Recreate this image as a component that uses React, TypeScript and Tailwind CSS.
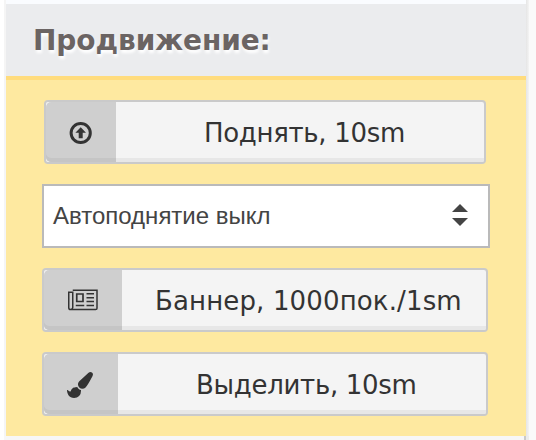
import React from 'react';

function ArrowCircleUpIcon() {
  return (
    <svg width="24" height="24" viewBox="0 0 24 24" fill="none">
      <circle cx="11.7" cy="12" r="9.6" stroke="#333" strokeWidth="3" />
      <path d="M11.7 6.2 17 11.8H13.7V17.2H9.7V11.8H6.4Z" fill="#333" />
    </svg>
  );
}

function NewspaperIcon() {
  return (
    <svg width="30" height="22" viewBox="0 0 30 22" fill="none" stroke="#333" strokeWidth="1.5">
      <path d="M4.75 1.25H29V19.2Q29 20.5 27.7 20.5H2.5Q.75 20.5 .75 18.7V3.25H4.75V18.5Q4.75 20.2 3 20.5" />
      <path d="M8.75 5H15V12.5H8.75Z" strokeWidth="1.7" />
      <path d="M18.5 4.75H26M18.5 8.75H26M18.5 12.5H26M7.75 16.5H16.25M18.5 16.5H26" />
    </svg>
  );
}

function BrushIcon() {
  return (
    <svg width="26" height="26" viewBox="0 0 1792 1792" fill="#333">
      <path d="M1615 0q70 0 122.5 46.5t52.5 116.5q0 63-45 151-332 629-465 752-97 91-218 91-126 0-216.5-92.5t-90.5-219.5q0-128 92-212l638-579q59-54 130-54zm-909 1034q39 76 106.5 130t150.5 76l1 71q4 213-129.5 347t-348.5 134q-123 0-218-46.5t-152.5-127.5-86.5-183-29-220q7 5 41 30t62 44.5 59 36.5 46 17q41 0 55-37 25-66 57.5-112.5t69.5-76 88-47.5 103-25.5 125-10.5z" />
    </svg>
  );
}

interface PromoButtonProps {
  icon: React.ReactNode;
  label: string;
  className: string;
  iconClassName: string;
  labelClassName: string;
}

function PromoButton({ icon, label, className, iconClassName, labelClassName }: PromoButtonProps) {
  return (
    <button
      className={`flex h-16 overflow-hidden rounded-[4px] border-2 border-[#cacaca] bg-[#f4f4f4] text-left text-[#333] ${className}`}
    >
      <span
        className={`flex h-full shrink-0 items-center rounded-l-[5px] bg-[#cfcfcf] shadow-[inset_0_-4px_0_#c5c5c5] ${iconClassName}`}
      >
        {icon}
      </span>
      <span
        className={`flex h-full flex-1 items-center text-[26px] whitespace-nowrap shadow-[inset_0_-4px_0_#e7e7e7] ${labelClassName}`}
      >
        {label}
      </span>
    </button>
  );
}

export default function App() {
  return (
    <div className="flex h-[440px] w-[536px] flex-col overflow-hidden bg-[#fafafa] font-['DejaVu_Sans',sans-serif]">
      <div className="flex h-[436px] shrink-0">
        <div className="w-1 bg-white" />
        <div className="w-0.5 bg-[#f5f5f5]" />
        <section className="flex w-[520px] flex-col">
          <div className="h-1 bg-[#fafcff]" />
          <header className="flex h-[76px] items-center border-b-4 border-[#ffdc7d] bg-[#ebecee] pt-0.5 pl-[27px]">
            <h2 className="text-[28px] leading-9 font-bold tracking-[-0.08px] whitespace-nowrap text-[#6b6463] [text-shadow:1px_3px_3px_#fff]">
              Продвижение:
            </h2>
          </header>
          <div className="flex flex-1 flex-col gap-5 bg-[#fee9a0] pt-5 pl-9">
            <PromoButton
              icon={<ArrowCircleUpIcon />}
              label="Поднять, 10sm"
              className="ml-0.5 w-[442px]"
              iconClassName="w-[70px] pl-[23px] pt-0.5"
              labelClassName="pl-[88px] pt-0.5 tracking-[-0.31px]"
            />
            <button className="flex h-16 w-[448px] items-center justify-between border-2 border-[#bababa] bg-white pr-5 pl-[9px] font-['Liberation_Sans',sans-serif] text-2xl text-[#444]">
              Автоподнятие выкл
              <svg className="mb-0.5" width="16" height="22" viewBox="0 0 16 22" fill="#444">
                <path d="M8 0 16 8H0ZM0 14H16L8 22Z" />
              </svg>
            </button>
            <PromoButton
              icon={<NewspaperIcon />}
              label="Баннер, 1000пок./1sm"
              className="w-[446px]"
              iconClassName="w-[78px] pl-6"
              labelClassName="pl-[33px] pt-0.5 tracking-[0.14px]"
            />
            <PromoButton
              icon={<BrushIcon />}
              label="Выделить, 10sm"
              className="w-[446px]"
              iconClassName="w-[74px] pl-[23px] pt-0.5"
              labelClassName="pl-[78px] pt-0.5 tracking-[-0.3px]"
            />
          </div>
        </section>
        <div className="w-[3px] bg-linear-to-r from-[#e5e5e5] to-[#f4f4f4]" />
      </div>
      <div className="flex h-1">
        <div className="w-1 bg-white" />
        <div className="w-[520px] bg-[#f7f7f7]" />
        <div className="w-0.5 bg-[#cacaca]" />
        <div className="w-[3px] bg-[#ececec]" />
      </div>
    </div>
  );
}
